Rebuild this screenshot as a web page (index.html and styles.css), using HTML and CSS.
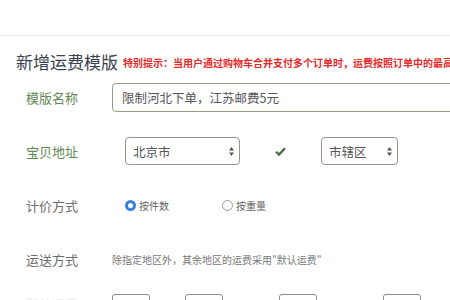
FILE: index.html
```html
<!DOCTYPE html>
<html lang="zh-CN">
<head>
    <meta charset="UTF-8">
    <title>新增运费模版</title>
    <link rel="stylesheet" href="styles.css">
</head>
<body>
    <div class="topbar"></div>

    <div class="title-row">
        <h1 class="title">新增运费模版</h1>
        <span class="notice">特别提示：当用户通过购物车合并支付多个订单时，运费按照订单中的最高运费收取</span>
    </div>

    <div class="form-row">
        <div class="label label-green">模版名称</div>
        <div class="text-input">限制河北下单，江苏邮费5元</div>
    </div>

    <div class="form-row">
        <div class="label label-green">宝贝地址</div>
        <div class="address">
            <div class="select select-province">北京市
                <svg class="arrows" width="5" height="9" viewBox="0 0 5 9"><path d="M2.5 0L5 3.5H0Z M2.5 9L5 5.5H0Z" fill="#555"/></svg>
            </div>
            <span class="check">
                <svg width="11" height="9" viewBox="0 0 11 9"><path d="M1 4.8L4 7.6L10 1.2" fill="none" stroke="#3f6b3b" stroke-width="2.2"/></svg>
            </span>
            <div class="select select-city">市辖区
                <svg class="arrows" width="5" height="9" viewBox="0 0 5 9"><path d="M2.5 0L5 3.5H0Z M2.5 9L5 5.5H0Z" fill="#555"/></svg>
            </div>
        </div>
    </div>

    <div class="form-row">
        <div class="label">计价方式</div>
        <div class="radios">
            <span class="radio-item"><span class="radio checked"></span>按件数</span>
            <span class="radio-item"><span class="radio"></span>按重量</span>
        </div>
    </div>

    <div class="form-row">
        <div class="label">运送方式</div>
        <div class="hint">除指定地区外，其余地区的运费采用"默认运费"</div>
    </div>

    <div class="form-row form-row-last">
        <div class="label label-faint">默认运费</div>
        <div class="fees">
            <span class="fee-box"></span><span class="faint gap-1">件内</span>
            <span class="fee-box"></span><span class="faint gap-2">元，每增加</span>
            <span class="fee-box"></span><span class="faint gap-3">件，增加</span>
            <span class="fee-box"></span><span class="faint">元</span>
        </div>
    </div>
</body>
</html>
```

FILE: styles.css
```css
body {
    margin: 0;
    background: #fff;
    font-family: "Noto Sans CJK SC", "Noto Sans", sans-serif;
    overflow: hidden;
}

.topbar {
    height: 35px;
    border-bottom: 1px solid #e8e8e8;
}

.title-row {
    height: 34px;
    padding: 18px 0 0 16px;
    display: flex;
    align-items: center;
    box-sizing: border-box;
    white-space: nowrap;
}

.title {
    margin: 0;
    font-size: 17px;
    font-weight: normal;
    color: #3b4150;
    line-height: 16px;
}

.notice {
    margin-left: 5px;
    font-size: 10px;
    line-height: 14px;
    font-weight: bold;
    color: #e52a2a;
    padding-top: 2px;
}

.form-row {
    height: 54px;
    display: flex;
    align-items: center;
    white-space: nowrap;
}

.label {
    width: 86px;
    padding-left: 26px;
    flex-shrink: 0;
    font-size: 13px;
    color: #6c6c6c;
}

.label-green {
    color: #5f8a55;
}

.label-faint {
    color: #ededed;
}

.text-input {
    flex: 1;
    height: 29px;
    margin-right: -20px;
    border: 1px solid #8fa088;
    border-radius: 4px;
    padding-left: 9px;
    box-sizing: border-box;
    display: flex;
    align-items: center;
    font-size: 12.5px;
    color: #555;
}

.address {
    display: flex;
    align-items: center;
    margin-left: 13px;
}

.select {
    height: 28px;
    border: 1px solid #8f9a8a;
    border-radius: 4px;
    box-sizing: border-box;
    padding: 0 5px 0 7px;
    display: flex;
    align-items: center;
    justify-content: space-between;
    font-size: 12.5px;
    color: #555;
}

.select-province {
    width: 115px;
}

.select-city {
    width: 77px;
}

.check {
    width: 81px;
    display: flex;
    justify-content: center;
}

.radios {
    display: flex;
    margin-left: 13px;
    font-size: 10px;
    color: #666;
}

.radio-item {
    display: flex;
    align-items: center;
    width: 97px;
}

.radio {
    width: 11px;
    height: 11px;
    border: 1px solid #999;
    border-radius: 50%;
    box-sizing: border-box;
    margin-right: 3px;
    background: #fff;
}

.radio.checked {
    border: 3px solid #3d7fe0;
}

.hint {
    font-size: 10px;
    color: #777;
}

.form-row-last {
    align-items: flex-start;
    padding-top: 8px;
    box-sizing: border-box;
}

.fees {
    display: flex;
    align-items: center;
    font-size: 9px;
}

.fee-box {
    width: 38px;
    height: 28px;
    flex-shrink: 0;
    border: 1px solid #8a8f88;
    border-radius: 3px;
    box-sizing: border-box;
}

.faint {
    color: #ededed;
    padding: 0 4px;
    box-sizing: border-box;
    overflow: hidden;
}

.gap-1 { width: 35px; }
.gap-2 { width: 56px; }
.gap-3 { width: 66px; }
```
